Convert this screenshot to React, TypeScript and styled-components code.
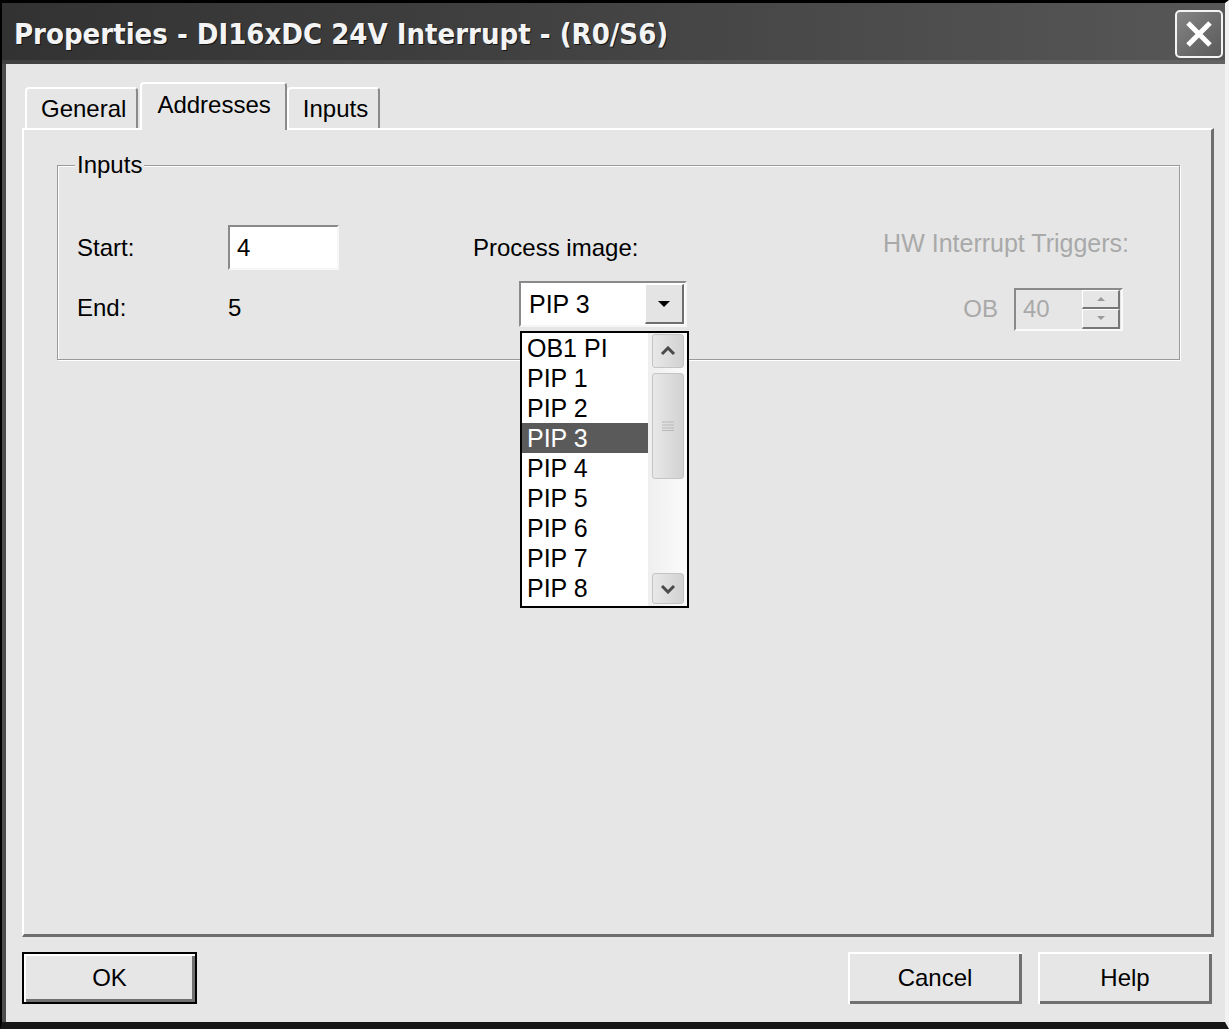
import React from 'react';
import styled, { createGlobalStyle } from 'styled-components';

const UI = '"Liberation Sans", Arial, sans-serif';

const GlobalStyle = createGlobalStyle`
  html, body {
    margin: 0;
    padding: 0;
    background: #e6e6e6;
    overflow: hidden;
  }
  * {
    box-sizing: border-box;
  }
`;

const Window = styled.div`
  width: 1229px;
  height: 1029px;
  display: flex;
  flex-direction: column;
  background: #e6e6e6;
  border-top: 3px solid #000;
  border-bottom: 7px solid #161616;
  border-left: 2px solid #000;
  border-right: 4px solid #f2f2f2;
  box-shadow: inset 4px 0 0 #4d4d4d;
  font-family: ${UI};
  color: #000;
`;

const TitleBar = styled.div`
  height: 61px;
  flex: none;
  display: flex;
  align-items: center;
  justify-content: space-between;
  padding: 0 2px 0 12px;
  background: linear-gradient(to right, #323232 0%, #454545 55%, #575757 100%);
  box-shadow: inset 0 -4px 0 rgba(255, 255, 255, 0.07);
`;

const Title = styled.div`
  font-family: "DejaVu Sans Condensed", "DejaVu Sans", sans-serif;
  font-weight: bold;
  font-size: 29px;
  color: #f4f4f4;
  text-shadow: 1px 1px 0 #151515;
  white-space: nowrap;
`;

const CloseButton = styled.button`
  width: 48px;
  height: 48px;
  padding: 0;
  border: 2px solid #f4f4f4;
  border-radius: 5px;
  background: linear-gradient(135deg, #858585 0%, #6a6a6a 60%, #5c5c5c 100%);
  display: flex;
  align-items: center;
  justify-content: center;
  margin-top: 1px;
`;

const Body = styled.div`
  flex: 1;
  display: flex;
  flex-direction: column;
  padding: 18px 11px 18px 20px;
`;

const TabStrip = styled.div`
  display: flex;
  align-items: flex-end;
  height: 48px;
  padding-left: 3px;
  margin-bottom: -2px;
  position: relative;
  z-index: 1;
`;

const Tab = styled.div<{ $active?: boolean }>`
  height: ${(p) => (p.$active ? '48px' : '41px')};
  margin-bottom: ${(p) => (p.$active ? '0' : '2px')};
  margin-right: ${(p) => (p.$active ? '0' : '2px')};
  padding: ${(p) => (p.$active ? '0 14px 5px 15px' : '0 10px 0 14px')};
  display: flex;
  align-items: center;
  background: #e6e6e6;
  border-top: 2px solid #fff;
  border-left: 2px solid #fff;
  border-right: 2px solid #8a8a8a;
  border-radius: 4px 4px 0 0;
  font-size: 24px;
  white-space: nowrap;
`;

const Panel = styled.div`
  flex: 1;
  background: #e6e6e6;
  border-top: 2px solid #fff;
  border-left: 2px solid #fff;
  border-right: 3px solid #6e6e6e;
  border-bottom: 3px solid #6e6e6e;
  padding: 35px 31px 0 33px;
`;

const GroupBox = styled.div`
  position: relative;
  border: 1px solid #9a9a9a;
  box-shadow: inset 1px 1px 0 #fff, 1px 1px 0 #fff;
  padding: 59px 50px 29px 19px;
  display: grid;
  grid-template-columns: 151px 245px 1fr auto;
  grid-template-rows: 45px 44px;
  row-gap: 16px;
`;

const Legend = styled.div`
  position: absolute;
  top: -16px;
  left: 17px;
  padding: 0 2px;
  background: #e6e6e6;
  font-size: 24px;
  line-height: 30px;
`;

const Label = styled.div<{ $disabled?: boolean }>`
  font-size: 24px;
  line-height: 30px;
  align-self: center;
  white-space: nowrap;
  color: ${(p) => (p.$disabled ? '#a9a9a9' : '#000')};
`;

const TriggerLabel = styled(Label)`
  align-self: start;
  justify-self: end;
  margin-top: 3px;
  font-size: 25px;
`;

const TextBox = styled.div`
  width: 111px;
  height: 45px;
  background: #fff;
  border-top: 2px solid #8a8a8a;
  border-left: 2px solid #8a8a8a;
  border-bottom: 2px solid #f6f6f6;
  border-right: 2px solid #f6f6f6;
  padding-left: 7px;
  display: flex;
  align-items: center;
  font-size: 24px;
`;

const Combo = styled.div`
  position: relative;
  align-self: start;
  margin-top: -5px;
  margin-left: 46px;
  width: 168px;
  height: 46px;
  background: #fff;
  border-top: 2px solid #8a8a8a;
  border-left: 2px solid #8a8a8a;
  border-bottom: 2px solid #f6f6f6;
  border-right: 2px solid #f6f6f6;
  padding-left: 8px;
  display: flex;
  align-items: center;
  font-size: 25px;
`;

const DropButton = styled.div`
  margin-left: auto;
  margin-right: 1px;
  width: 39px;
  height: 40px;
  background: #e4e4e4;
  border-top: 1px solid #fff;
  border-left: 1px solid #fff;
  border-right: 2px solid #6e6e6e;
  border-bottom: 2px solid #6e6e6e;
  display: flex;
  align-items: center;
  justify-content: center;
`;

const ListBox = styled.div`
  position: absolute;
  top: 48px;
  left: -1px;
  width: 169px;
  height: 277px;
  background: #fff;
  border: 2px solid #000;
  display: flex;
  z-index: 2;
`;

const Items = styled.div`
  flex: 1;
  display: flex;
  flex-direction: column;
`;

const Item = styled.div<{ $selected?: boolean }>`
  height: 30px;
  line-height: 30px;
  padding-left: 5px;
  font-size: 25px;
  white-space: nowrap;
  background: ${(p) => (p.$selected ? '#5a5a5a' : 'transparent')};
  color: ${(p) => (p.$selected ? '#fff' : '#000')};
`;

const ScrollBar = styled.div`
  width: 39px;
  display: flex;
  flex-direction: column;
  padding: 1px 3px 2px 4px;
  background: linear-gradient(to right, #efefef, #fbfbfb);
`;

const ScrollPart = styled.div<{ $h: number }>`
  height: ${(p) => p.$h}px;
  flex: none;
  border: 1px solid #c4c4c4;
  border-radius: 3px;
  background: linear-gradient(to right, #e8e8e8, #d2d2d2);
  display: flex;
  align-items: center;
  justify-content: center;
`;

const Thumb = styled(ScrollPart)`
  margin-top: 5px;
`;

const ScrollSpacer = styled.div`
  flex: 1;
`;

const OBRow = styled.div`
  justify-self: end;
  align-self: center;
  margin-right: 6px;
  margin-top: 2px;
  display: flex;
  align-items: center;
  gap: 16px;
`;

const SpinBox = styled.div`
  width: 109px;
  height: 43px;
  background: #e6e6e6;
  border-top: 2px solid #8a8a8a;
  border-left: 2px solid #8a8a8a;
  border-bottom: 2px solid #fafafa;
  border-right: 2px solid #fafafa;
  display: flex;
  align-items: center;
  padding-left: 7px;
  font-size: 24px;
  color: #a9a9a9;
`;

const SpinButtons = styled.div`
  margin-left: auto;
  margin-right: 1px;
  width: 38px;
  height: 39px;
  display: flex;
  flex-direction: column;
`;

const SpinButton = styled.div`
  flex: 1;
  background: #e6e6e6;
  border-top: 1px solid #fff;
  border-left: 1px solid #fff;
  border-right: 2px solid #777;
  border-bottom: 2px solid #777;
  display: flex;
  align-items: center;
  justify-content: center;
`;

const ButtonRow = styled.div`
  display: flex;
  justify-content: space-between;
  margin-top: 15px;
  padding-right: 2px;
`;

const ButtonGroup = styled.div`
  display: flex;
  gap: 16px;
`;

const DialogButton = styled.button<{ $default?: boolean }>`
  width: ${(p) => (p.$default ? '175px' : '174px')};
  height: 52px;
  padding: 0;
  background: #e6e6e6;
  border: ${(p) => (p.$default ? '2px solid #000' : 'none')};
  box-shadow: inset 2px 2px 0 #fff, inset -3px -3px 0 #707070;
  font-family: ${UI};
  font-size: 24px;
  color: #000;
`;

const Chevron = ({ up }: { up?: boolean }) => (
  <svg width="16" height="10" viewBox="0 0 16 10">
    <polyline
      points={up ? '2,8 8,2 14,8' : '2,2 8,8 14,2'}
      fill="none"
      stroke="#4a4a4a"
      strokeWidth="3"
    />
  </svg>
);

const Triangle = ({ up, size, color }: { up?: boolean; size: number; color: string }) => (
  <svg width={size} height={size / 2} viewBox="0 0 10 5">
    <polygon points={up ? '0,5 5,0 10,5' : '0,0 10,0 5,5'} fill={color} />
  </svg>
);

const items = ['OB1 PI', 'PIP 1', 'PIP 2', 'PIP 3', 'PIP 4', 'PIP 5', 'PIP 6', 'PIP 7', 'PIP 8'];

export default function App() {
  return (
    <>
      <GlobalStyle />
      <Window>
        <TitleBar>
          <Title>Properties - DI16xDC 24V Interrupt - (R0/S6)</Title>
          <CloseButton aria-label="Close">
            <svg width="30" height="30" viewBox="0 0 30 30">
              <path d="M4 4 L26 26 M26 4 L4 26" stroke="#fff" strokeWidth="5" />
            </svg>
          </CloseButton>
        </TitleBar>

        <Body>
          <TabStrip>
            <Tab>General</Tab>
            <Tab $active>Addresses</Tab>
            <Tab>Inputs</Tab>
          </TabStrip>

          <Panel>
            <GroupBox>
              <Legend>Inputs</Legend>

              <Label>Start:</Label>
              <TextBox>4</TextBox>
              <Label>Process image:</Label>
              <TriggerLabel $disabled>HW Interrupt Triggers:</TriggerLabel>

              <Label>End:</Label>
              <Label>5</Label>
              <Combo>
                PIP 3
                <DropButton>
                  <Triangle size={12} color="#000" />
                </DropButton>
                <ListBox>
                  <Items>
                    {items.map((it) => (
                      <Item key={it} $selected={it === 'PIP 3'}>
                        {it}
                      </Item>
                    ))}
                  </Items>
                  <ScrollBar>
                    <ScrollPart $h={34}>
                      <Chevron up />
                    </ScrollPart>
                    <Thumb $h={106}>
                      <svg width="12" height="10" viewBox="0 0 12 10">
                        <path d="M0 1 H12 M0 4 H12 M0 7 H12 M0 9.5 H12" stroke="#b8b8b8" strokeWidth="1" />
                      </svg>
                    </Thumb>
                    <ScrollSpacer />
                    <ScrollPart $h={31}>
                      <Chevron />
                    </ScrollPart>
                  </ScrollBar>
                </ListBox>
              </Combo>
              <OBRow>
                <Label $disabled>OB</Label>
                <SpinBox>
                  40
                  <SpinButtons>
                    <SpinButton>
                      <Triangle up size={8} color="#9a9a9a" />
                    </SpinButton>
                    <SpinButton>
                      <Triangle size={8} color="#9a9a9a" />
                    </SpinButton>
                  </SpinButtons>
                </SpinBox>
              </OBRow>
            </GroupBox>
          </Panel>

          <ButtonRow>
            <DialogButton $default>OK</DialogButton>
            <ButtonGroup>
              <DialogButton>Cancel</DialogButton>
              <DialogButton>Help</DialogButton>
            </ButtonGroup>
          </ButtonRow>
        </Body>
      </Window>
    </>
  );
}
